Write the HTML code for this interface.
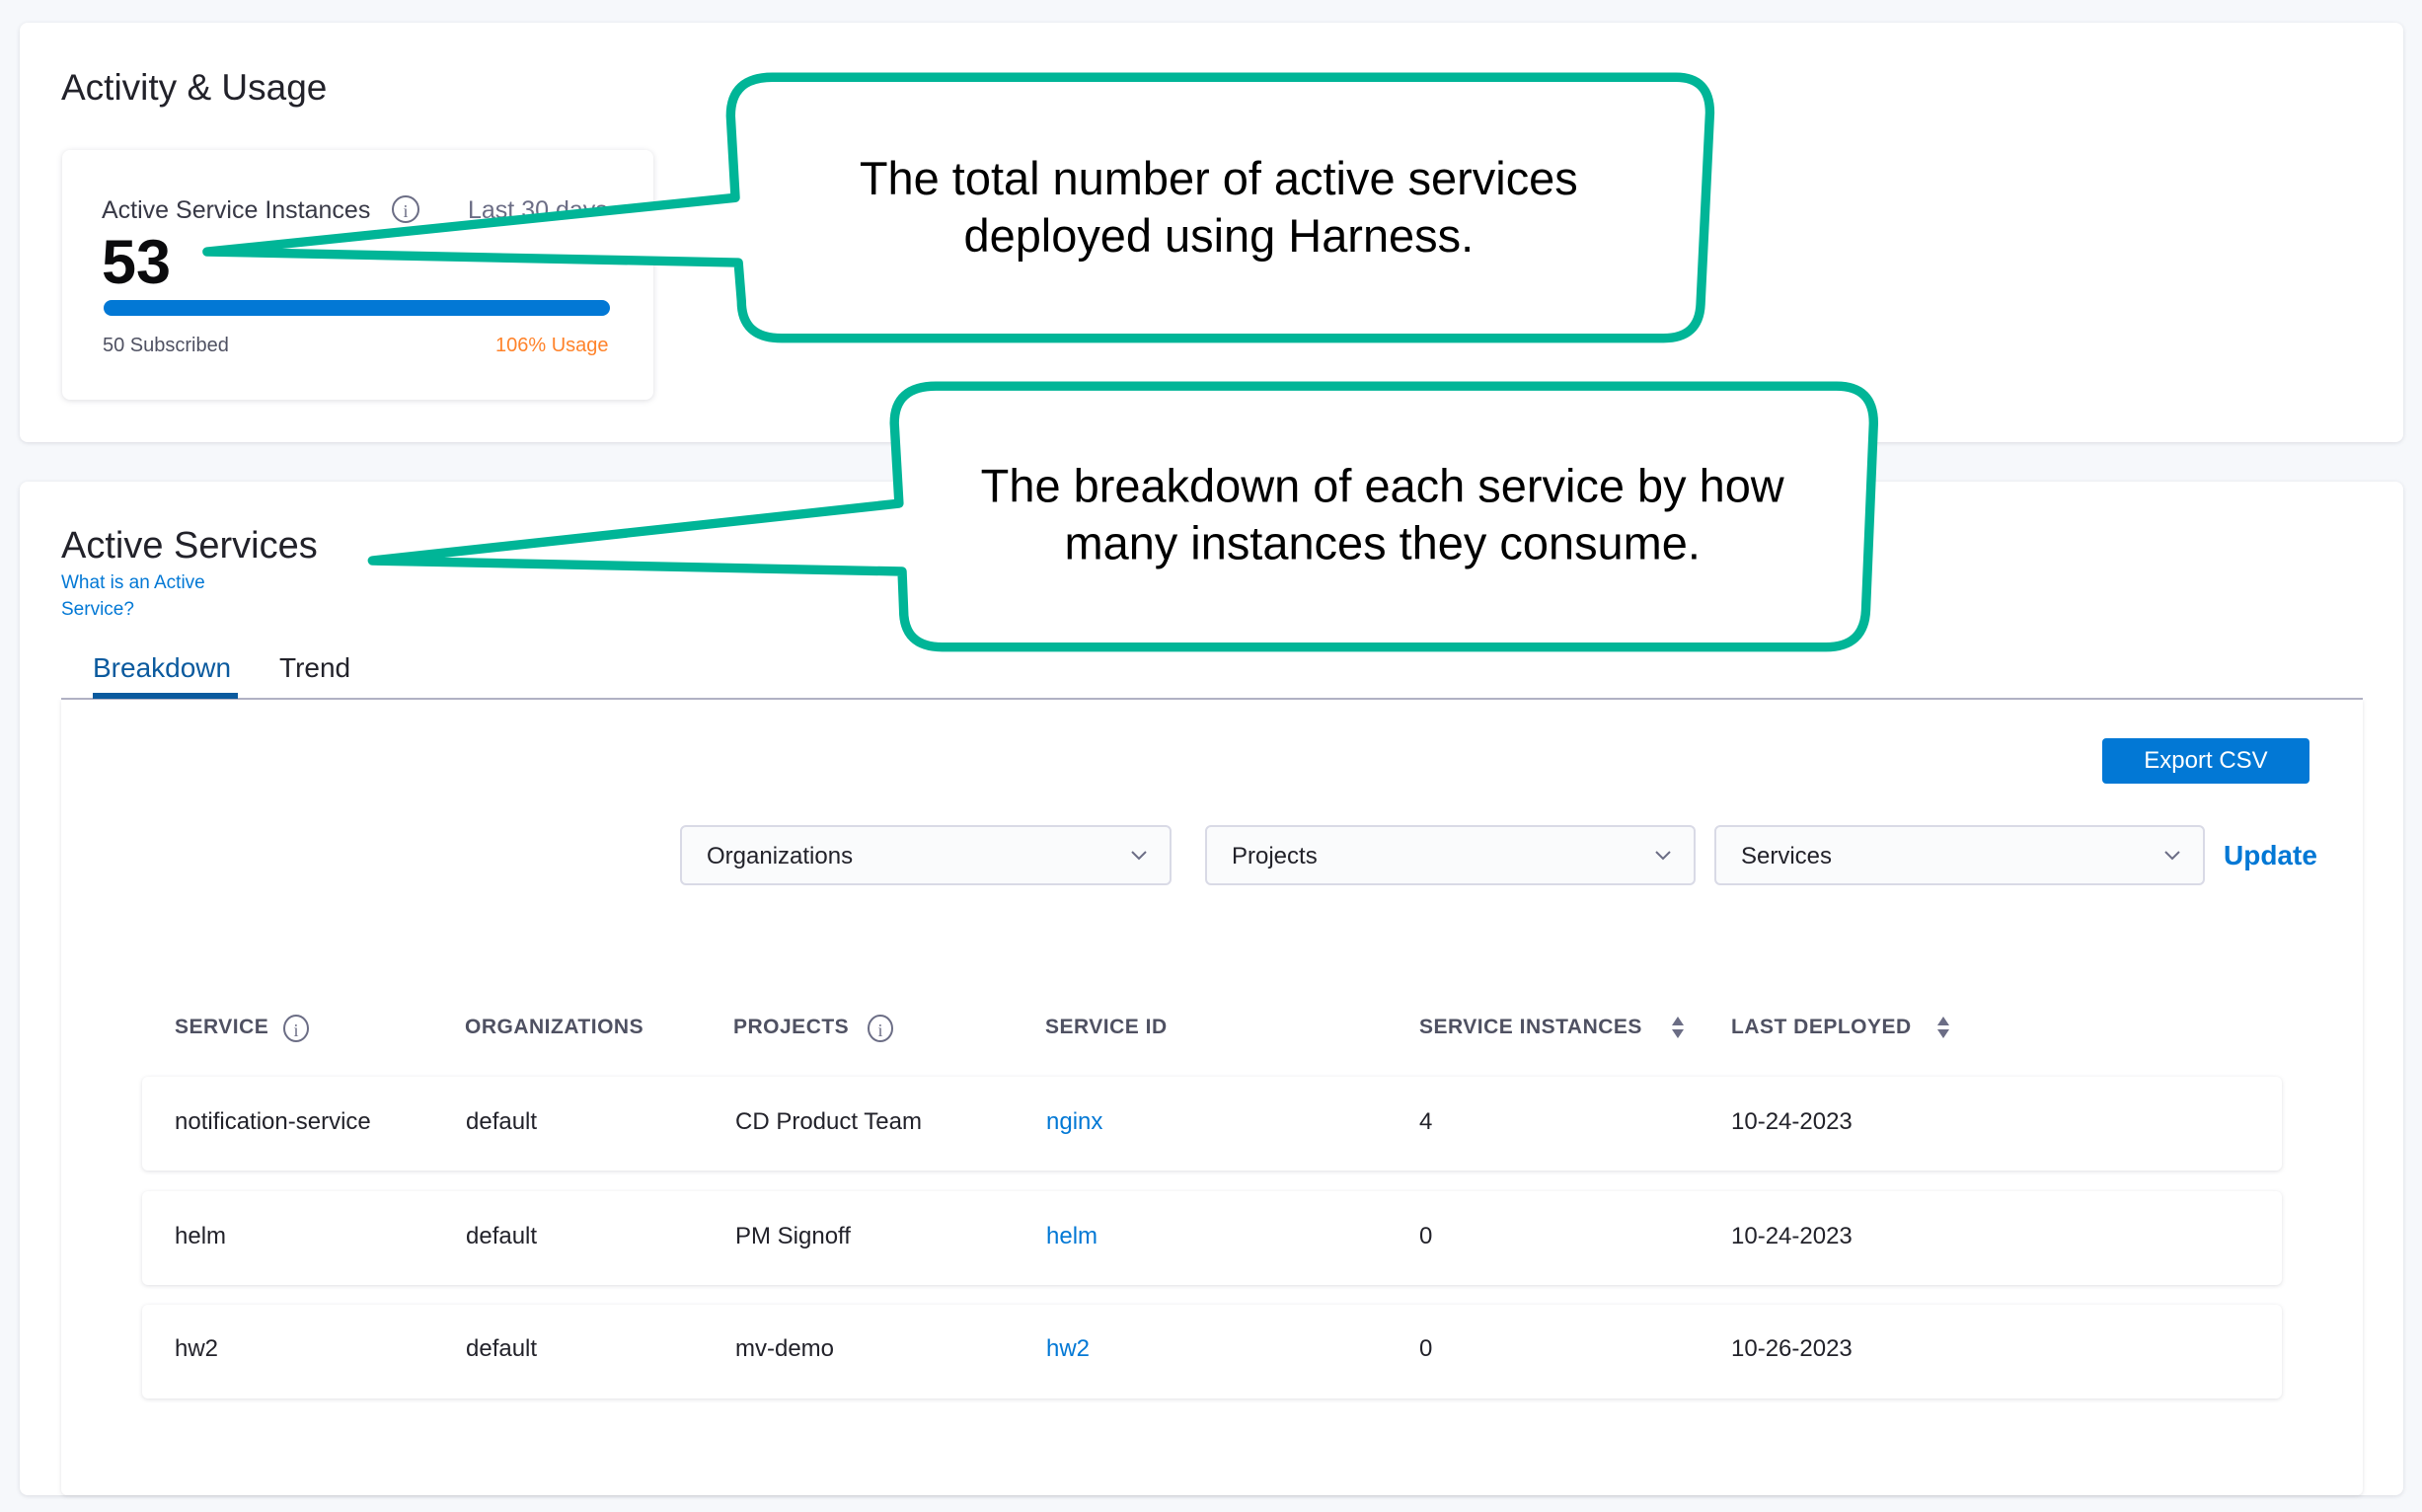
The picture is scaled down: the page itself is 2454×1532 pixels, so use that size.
<!DOCTYPE html>
<html><head><meta charset="utf-8"><style>
*{margin:0;padding:0;box-sizing:border-box}
body{width:2454px;height:1532px;background:#f6f8fb;position:relative;overflow:hidden;font-family:"Liberation Sans",sans-serif;color:#22222a}
.a{position:absolute;white-space:nowrap}
.card{position:absolute;background:#fff;border-radius:8px;box-shadow:0 1px 4px rgba(96,97,112,.18)}
.dd{position:absolute;top:836px;height:61px;background:#fafbfc;border:2px solid #d9dae6;border-radius:6px;font-size:24px;padding:16px 0 0 25px;color:#22222a}
.dd svg{position:absolute;right:22px;top:22px}
.th{position:absolute;top:1029px;font-size:21px;font-weight:bold;color:#4f5162;letter-spacing:.5px}
.row{position:absolute;left:144px;width:2168px;height:95px;background:#fff;border-radius:6px;box-shadow:0 1px 4px rgba(96,97,112,.2)}
.td{position:absolute;font-size:24px;color:#22222a}
.lk{color:#0278d5}
</style></head><body>
<div class="card" style="left:20px;top:23px;width:2415px;height:425px"></div>
<div class="a" style="left:62px;top:68px;font-size:37px">Activity &amp; Usage</div>
<div class="card" style="left:63px;top:152px;width:599px;height:253px;box-shadow:0 1px 6px rgba(96,97,112,.22)"></div>
<div class="a" style="left:103px;top:199px;font-size:25px;color:#383946">Active Service Instances</div>
<svg class="a" style="left:395px;top:196px" width="32" height="32"><circle cx="16" cy="16" r="13" fill="none" stroke="#6b6d85" stroke-width="2"/><text x="16" y="24" font-size="18" text-anchor="middle" fill="#6b6d85" font-family="Liberation Serif">i</text></svg>
<div class="a" style="left:474px;top:199px;font-size:25px;color:#6b6d85">Last 30 days</div>
<div class="a" style="left:103px;top:230px;font-size:63px;font-weight:bold;color:#0b0b0d">53</div>
<div class="a" style="left:105px;top:304px;width:513px;height:16px;border-radius:8px;background:#0278d5"></div>
<div class="a" style="left:104px;top:339px;font-size:20px;color:#4f5162">50 Subscribed</div>
<div class="a" style="left:502px;top:339px;font-size:20px;color:#ff832b">106% Usage</div>

<div class="card" style="left:20px;top:488px;width:2415px;height:1027px"></div>
<div class="a" style="left:62px;top:532px;font-size:38px">Active Services</div>
<div class="a" style="left:62px;top:577px;font-size:19px;color:#0278d5;line-height:27px">What is an Active<br>Service?</div>
<div class="a" style="left:94px;top:661px;font-size:28px;color:#0b5a9e">Breakdown</div>
<div class="a" style="left:283px;top:661px;font-size:28px;color:#22222a">Trend</div>
<div class="card" style="left:62px;top:709px;width:2332px;height:806px;border-radius:0 0 6px 6px"></div>
<div class="a" style="left:62px;top:707px;width:2332px;height:2px;background:#b0b1c3"></div>
<div class="a" style="left:94px;top:702px;width:147px;height:6px;background:#0b5a9e"></div>

<div class="a" style="left:2130px;top:748px;width:210px;height:46px;background:#0278d5;border-radius:4px;color:#fff;font-size:24px;text-align:center;line-height:46px">Export CSV</div>
<div class="dd" style="left:689px;width:498px">Organizations<svg width="18" height="14"><path d="M2 3l7 7 7-7" fill="none" stroke="#6b6d85" stroke-width="2"/></svg></div>
<div class="dd" style="left:1221px;width:497px">Projects<svg width="18" height="14"><path d="M2 3l7 7 7-7" fill="none" stroke="#6b6d85" stroke-width="2"/></svg></div>
<div class="dd" style="left:1737px;width:497px">Services<svg width="18" height="14"><path d="M2 3l7 7 7-7" fill="none" stroke="#6b6d85" stroke-width="2"/></svg></div>
<div class="a" style="left:2253px;top:851px;font-size:28px;font-weight:bold;color:#0278d5">Update</div>

<div class="th" style="left:177px">SERVICE</div>
<svg class="a" style="left:285px;top:1026px" width="30" height="32"><ellipse cx="15" cy="16" rx="12" ry="13" fill="none" stroke="#6b6d85" stroke-width="2"/><text x="15" y="24" font-size="18" text-anchor="middle" fill="#6b6d85" font-family="Liberation Serif">i</text></svg>
<div class="th" style="left:471px">ORGANIZATIONS</div>
<div class="th" style="left:743px">PROJECTS</div>
<svg class="a" style="left:877px;top:1026px" width="30" height="32"><ellipse cx="15" cy="16" rx="12" ry="13" fill="none" stroke="#6b6d85" stroke-width="2"/><text x="15" y="24" font-size="18" text-anchor="middle" fill="#6b6d85" font-family="Liberation Serif">i</text></svg>
<div class="th" style="left:1059px">SERVICE ID</div>
<div class="th" style="left:1438px">SERVICE INSTANCES</div>
<svg class="a" style="left:1692px;top:1028px" width="16" height="26"><path d="M8 2l6 9H2zM8 24l6-9H2z" fill="#6b6d85"/></svg>
<div class="th" style="left:1754px">LAST DEPLOYED</div>
<svg class="a" style="left:1961px;top:1028px" width="16" height="26"><path d="M8 2l6 9H2zM8 24l6-9H2z" fill="#6b6d85"/></svg>

<div class="row" style="top:1091px"></div>
<div class="row" style="top:1207px"></div>
<div class="row" style="top:1322px"></div>
<div class="td" style="left:177px;top:1123px">notification-service</div><div class="td" style="left:472px;top:1123px">default</div><div class="td" style="left:745px;top:1123px">CD Product Team</div><div class="td lk" style="left:1060px;top:1123px">nginx</div><div class="td" style="left:1438px;top:1123px">4</div><div class="td" style="left:1754px;top:1123px">10-24-2023</div>
<div class="td" style="left:177px;top:1239px">helm</div><div class="td" style="left:472px;top:1239px">default</div><div class="td" style="left:745px;top:1239px">PM Signoff</div><div class="td lk" style="left:1060px;top:1239px">helm</div><div class="td" style="left:1438px;top:1239px">0</div><div class="td" style="left:1754px;top:1239px">10-24-2023</div>
<div class="td" style="left:177px;top:1353px">hw2</div><div class="td" style="left:472px;top:1353px">default</div><div class="td" style="left:745px;top:1353px">mv-demo</div><div class="td lk" style="left:1060px;top:1353px">hw2</div><div class="td" style="left:1438px;top:1353px">0</div><div class="td" style="left:1754px;top:1353px">10-26-2023</div>

<svg class="a" style="left:0;top:0" width="2454" height="1532" viewBox="0 0 1568 979">
<path d="M500,50 L1085,50 Q1107,50 1107,73 L1101,197 Q1100,219 1077,219 L506,219 Q480,219 480,195 L478,170 L134,163 L476,128 L473,75 Q473,50 500,50 Z" fill="#fff" stroke="#00b597" stroke-width="6" stroke-linejoin="round"/>
<text x="789" y="126" font-size="30" text-anchor="middle" font-family="Liberation Sans" fill="#000">The total number of active services</text>
<text x="789" y="163" font-size="30" text-anchor="middle" font-family="Liberation Sans" fill="#000">deployed using Harness.</text>
<path d="M606,250 L1189,250 Q1213,250 1213,274 L1208,395 Q1207,419 1182,419 L610,419 Q585,419 585,395 L584,370 L241,363 L582,326 L579,274 Q579,250 606,250 Z" fill="#fff" stroke="#00b597" stroke-width="6" stroke-linejoin="round"/>
<text x="895" y="325" font-size="30" text-anchor="middle" font-family="Liberation Sans" fill="#000">The breakdown of each service by how</text>
<text x="895" y="362" font-size="30" text-anchor="middle" font-family="Liberation Sans" fill="#000">many instances they consume.</text>
</svg>
</body></html>
